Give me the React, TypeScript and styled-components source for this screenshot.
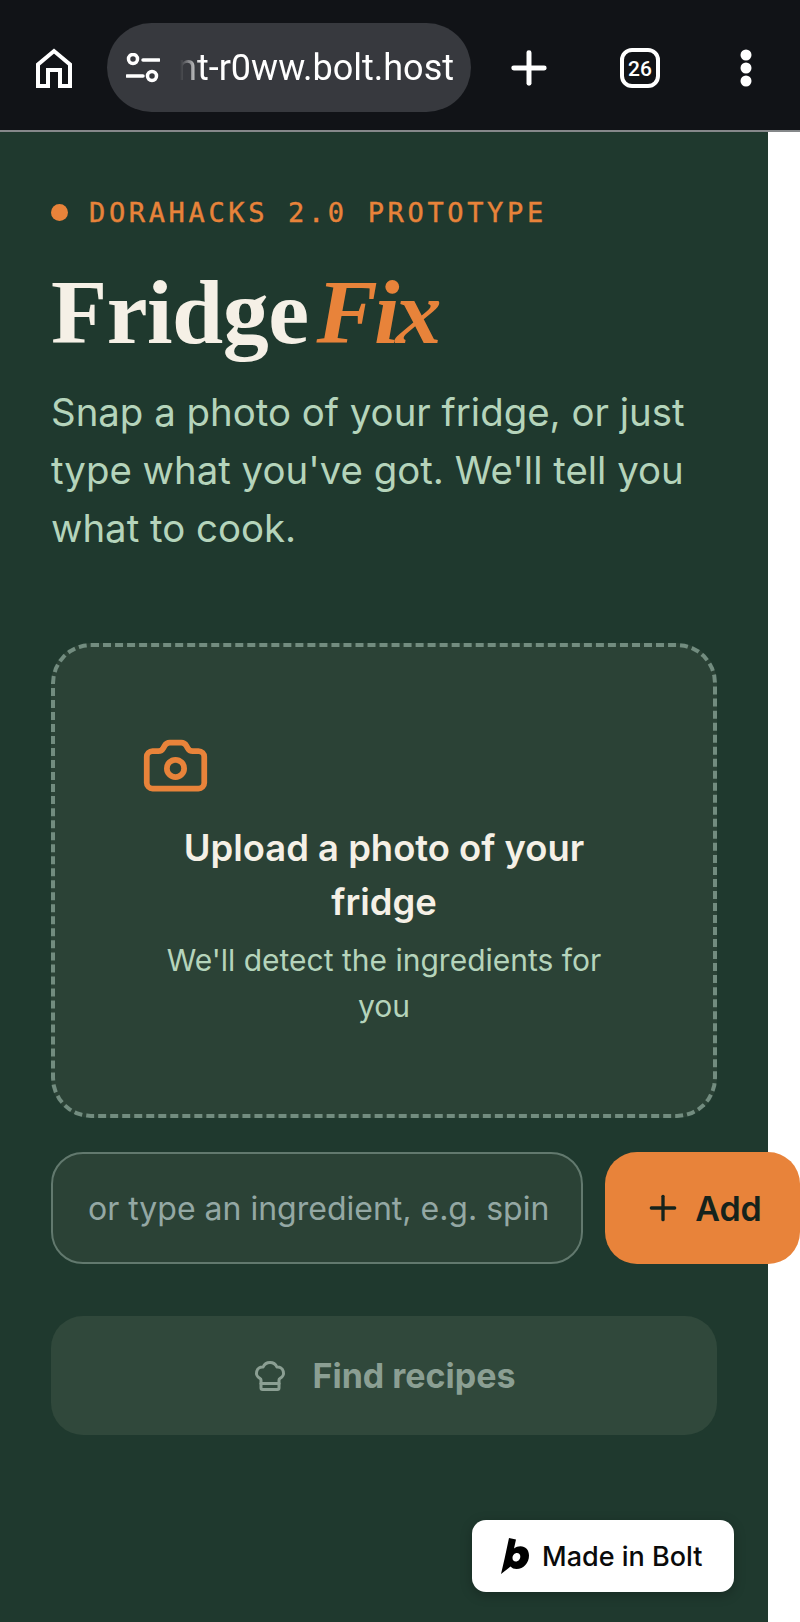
import React from "react";
import styled, { createGlobalStyle } from "styled-components";
import { Camera, ChefHat, Plus } from "lucide-react";

const GlobalStyle = createGlobalStyle`
  html, body {
    margin: 0;
    padding: 0;
    background: #fff;
  }

  * {
    box-sizing: border-box;
  }
`;

const Screen = styled.div`
  position: relative;
  width: 800px;
  height: 1622px;
  overflow: hidden;
  background: #fff;
  font-family: Inter, "Noto Sans", sans-serif;
`;

const BrowserBar = styled.header`
  display: flex;
  align-items: center;
  height: 132px;
  padding: 5px 0 0 36px;
  background: #111317;
  border-bottom: 2px solid #85888a;
`;

const HomeSlot = styled.div`
  display: flex;
  width: 71px;
  color: #fff;
`;

const UrlPill = styled.div`
  display: flex;
  align-items: center;
  width: 364px;
  height: 89px;
  padding: 0 17px 0 19px;
  border-radius: 45px;
  background: #37393e;
  color: #fff;
`;

const UrlClip = styled.div`
  display: flex;
  flex: 1;
  justify-content: flex-end;
  overflow: hidden;
  margin-left: 20px;
  -webkit-mask-image: linear-gradient(to right, transparent 0, #000 22px);
  mask-image: linear-gradient(to right, transparent 0, #000 22px);
`;

const UrlText = styled.span`
  font-family: Roboto, sans-serif;
  font-size: 36px;
  line-height: 44px;
  color: #fff;
  white-space: nowrap;
`;

const BarAction = styled.div<{ $width: number }>`
  display: flex;
  justify-content: center;
  width: ${({ $width }) => $width}px;
  color: #fff;
`;

const Page = styled.main`
  width: 768px;
  height: 1490px;
  padding: 66px 51px 0;
  background: #1f392e;
`;

const Eyebrow = styled.div`
  display: flex;
  align-items: center;
  gap: 21px;
  height: 28px;
  font-family: "DejaVu Sans Mono", "Liberation Mono", monospace;
  font-size: 27px;
  letter-spacing: 3.65px;
  -webkit-text-stroke: 0.4px #e8833a;
  color: #e8833a;
`;

const EyebrowDot = styled.span`
  width: 17px;
  height: 17px;
  border-radius: 50%;
  background: #e8833a;
`;

const Title = styled.h1`
  margin: 30px 0 0;
  font-family: "Liberation Serif", serif;
  font-size: 92px;
  font-weight: 700;
  line-height: 112px;
  letter-spacing: -0.5px;
  color: #f5f0e6;

  em {
    margin-left: 8px;
    font-style: italic;
    letter-spacing: -4px;
    color: #e8833a;
  }
`;

const Lead = styled.p`
  margin: 15px 0 0;
  font-size: 38.4px;
  line-height: 58px;
  color: #b5d4bb;
`;

const DropZone = styled.div`
  display: flex;
  flex-direction: column;
  align-items: center;
  height: 475px;
  margin-top: 86px;
  padding: 84px 93px 0;
  border: 4px dashed #728c7f;
  border-radius: 40px;
  background: #2b4236;
  text-align: center;
`;

const CameraIcon = styled(Camera)`
  flex: none;
  align-self: flex-start;
  width: 69px;
  height: 69px;
  margin-left: -7px;
  color: #e8833a;
`;

const DropTitle = styled.div`
  margin-top: 21px;
  font-size: 36.4px;
  font-weight: 600;
  line-height: 54px;
  color: #f5f0e6;
`;

const DropHint = styled.div`
  margin-top: 8px;
  font-size: 30px;
  line-height: 46px;
  color: #b5d4bb;
`;

const AddRow = styled.div`
  display: flex;
  gap: 22px;
  margin-top: 34px;
`;

const IngredientInput = styled.input`
  flex: 0 0 532px;
  min-width: 0;
  height: 112px;
  padding: 0 33px 0 35px;
  border: 2px solid #62796e;
  border-radius: 32px;
  background: #2b4236;
  font-family: inherit;
  font-size: 32px;
  color: #f5f0e6;

  &::placeholder {
    color: #94a8a4;
    opacity: 1;
  }
`;

const AddButton = styled.button`
  display: flex;
  flex: 0 0 195px;
  align-items: center;
  justify-content: center;
  gap: 12px;
  height: 112px;
  padding: 0;
  border: 0;
  border-radius: 32px;
  background: #e8833a;
  font-family: inherit;
  font-size: 34px;
  font-weight: 600;
  color: #15231c;
`;

const FindButton = styled.button`
  display: flex;
  align-items: center;
  justify-content: center;
  gap: 24px;
  width: 100%;
  height: 119px;
  margin-top: 52px;
  border: 0;
  border-radius: 32px;
  background: #30483b;
  font-family: inherit;
  font-size: 34px;
  font-weight: 700;
  color: #8b9f93;
`;

const BoltBadge = styled.div`
  position: absolute;
  left: 472px;
  top: 1520px;
  display: flex;
  align-items: center;
  gap: 13px;
  width: 262px;
  height: 72px;
  padding-left: 29px;
  border-radius: 14px;
  background: #fff;
  box-shadow: 0 3px 12px rgba(0, 0, 0, 0.25);
  font-size: 27px;
  font-weight: 500;
  color: #0a0a0a;
`;

const HomeIcon = () => (
  <svg width="36" height="40" viewBox="0 0 36 40" fill="none" stroke="currentColor" strokeWidth="4">
    <path d="M2 38V16.500L18 3l16 13.500V38H24V22H12v16H2z" />
  </svg>
);

const TuneIcon = () => (
  <svg width="34" height="30" viewBox="0 0 34 30" fill="none" stroke="currentColor" strokeWidth="3.500" style={{ flex: "none" }}>
    <circle cx="7" cy="6" r="4.500" />
    <path d="M17 7h16M1 23h16" strokeLinecap="round" />
    <circle cx="26" cy="23" r="4.500" />
  </svg>
);

const TabIcon = () => (
  <svg width="40" height="40" viewBox="0 0 40 40">
    <rect x="2" y="2" width="36" height="36" rx="10" fill="none" stroke="currentColor" strokeWidth="4" />
    <text x="20" y="27.500" textAnchor="middle" fontFamily="Roboto, sans-serif" fontSize="21" fontWeight="500" fill="currentColor">
      26
    </text>
  </svg>
);

const MoreIcon = () => (
  <svg width="12" height="38" viewBox="0 0 12 38" fill="currentColor">
    <circle cx="6" cy="6" r="5.500" />
    <circle cx="6" cy="19" r="5.500" />
    <circle cx="6" cy="32" r="5.500" />
  </svg>
);

const BoltLogo = () => (
  <svg width="28" height="36" viewBox="0 0 28 36" fill="#000">
    <path
      fillRule="evenodd"
      d="M8 0l7 1.500-2 9c2-1.500 4-2.200 6.500-2.200C24.500 8.300 28 12 28 17.500 28 25 22.500 31 15.500 31c-2.500 0-4.500-.8-6-2.500L0 36l3.500-15L8 0zm8 15c-2.500 0-4.500 2.300-4.500 5 0 2 1.300 3.500 3.300 3.500 2.500 0 4.500-2.300 4.500-5 0-2-1.300-3.500-3.300-3.500z"
    />
  </svg>
);

const App = () => {
  return (
    <Screen>
      <GlobalStyle />
      <BrowserBar>
        <HomeSlot>
          <HomeIcon />
        </HomeSlot>
        <UrlPill>
          <TuneIcon />
          <UrlClip>
            <UrlText>nt-r0ww.bolt.host</UrlText>
          </UrlClip>
        </UrlPill>
        <BarAction $width={116}>
          <Plus size={52} strokeWidth={2.3} />
        </BarAction>
        <BarAction $width={106}>
          <TabIcon />
        </BarAction>
        <BarAction $width={106}>
          <MoreIcon />
        </BarAction>
      </BrowserBar>

      <Page>
        <Eyebrow>
          <EyebrowDot />
          DORAHACKS 2.0 PROTOTYPE
        </Eyebrow>
        <Title>
          Fridge<em>Fix</em>
        </Title>
        <Lead>Snap a photo of your fridge, or just type what you've got. We'll tell you what to cook.</Lead>

        <DropZone>
          <CameraIcon strokeWidth={2} />
          <DropTitle>Upload a photo of your fridge</DropTitle>
          <DropHint>We'll detect the ingredients for you</DropHint>
        </DropZone>

        <AddRow>
          <IngredientInput placeholder="or type an ingredient, e.g. spinach" />
          <AddButton>
            <Plus size={40} strokeWidth={2} />
            Add
          </AddButton>
        </AddRow>

        <FindButton>
          <ChefHat size={36} strokeWidth={2} />
          Find recipes
        </FindButton>
      </Page>

      <BoltBadge>
        <BoltLogo />
        Made in Bolt
      </BoltBadge>
    </Screen>
  );
};

export default App;
